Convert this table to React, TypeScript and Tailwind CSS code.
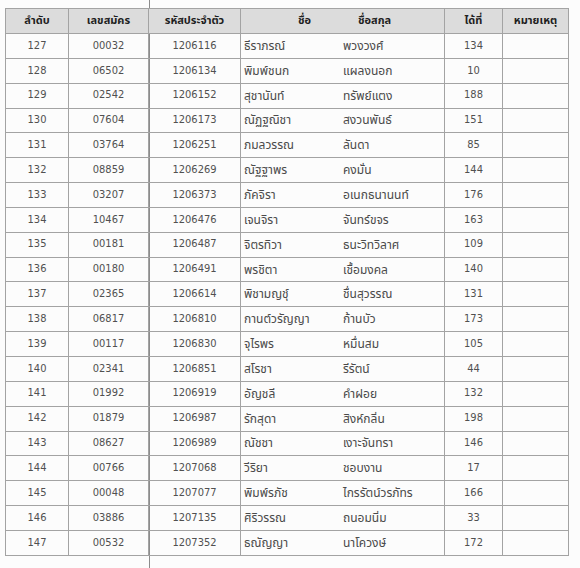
import React from 'react';

// ตารางรายชื่อผู้สอบผ่าน (สแกนจากเอกสาร)

type Row = [number, string, string, string, string, number];

const rows: Row[] = [
  [127, '00032', '1206116', 'ธีราภรณ์', 'พวงวงศ์', 134],
  [128, '06502', '1206134', 'พิมพ์ชนก', 'แผลงนอก', 10],
  [129, '02542', '1206152', 'สุชานันท์', 'ทรัพย์แตง', 188],
  [130, '07604', '1206173', 'ณัฏฐณิชา', 'สงวนพันธ์', 151],
  [131, '03764', '1206251', 'ภมลวรรณ', 'ลันดา', 85],
  [132, '08859', '1206269', 'ณัฐฐาพร', 'คงมั่น', 144],
  [133, '03207', '1206373', 'ภัคจิรา', 'อเนกธนานนท์', 176],
  [134, '10467', '1206476', 'เจนจิรา', 'จันทร์ขจร', 163],
  [135, '00181', '1206487', 'จิตรทิวา', 'ธนะวิทวิลาศ', 109],
  [136, '00180', '1206491', 'พรชิตา', 'เชื้อมงคล', 140],
  [137, '02365', '1206614', 'พิชามญชุ์', 'ชื่นสุวรรณ', 131],
  [138, '06817', '1206810', 'กานต์วรัญญา', 'ก้านบัว', 173],
  [139, '00117', '1206830', 'จุไรพร', 'หมื่นสม', 105],
  [140, '02341', '1206851', 'สโรชา', 'รีรัตน์', 44],
  [141, '01992', '1206919', 'อัญชลี', 'คำฝอย', 132],
  [142, '01879', '1206987', 'รักสุดา', 'สิงห์กลิ่น', 198],
  [143, '08627', '1206989', 'ณัชชา', 'เงาะจันทรา', 146],
  [144, '00766', '1207068', 'วีริยา', 'ชอบงาน', 17],
  [145, '00048', '1207077', 'พิมพ์รภัช', 'ไกรรัตน์วรภัทร', 166],
  [146, '03886', '1207135', 'ศิริวรรณ', 'ถนอมนิ่ม', 33],
  [147, '00532', '1207352', 'ธณัญญา', 'นาโควงษ์', 172],
];

const cell = 'border border-[#a3a3a3] text-center';
// ตัวเลขในเอกสารเป็นฟอนต์แคบ
const num = `${cell} font-['DejaVu_Sans_Condensed','DejaVu_Sans',sans-serif] font-stretch-condensed text-[11px] text-[#505050]`;

export default function App() {
  return (
    <div
      className="relative w-[580px] h-[568px] overflow-hidden bg-[#fcfcfc] pl-[5px] pt-[8px] text-[12px] text-[#4a4a4a]"
      style={{ fontFamily: '"Noto Sans Thai", "Noto Sans", "DejaVu Sans", sans-serif' }}
    >
      {/* เส้นพับกระดาษจากการสแกน */}
      <div className="absolute left-[149px] top-0 h-[568px] w-px bg-[#8c8c8c]" />
      <table className="relative table-fixed border-collapse">
        <colgroup>
          <col className="w-[63px]" />
          <col className="w-[80px]" />
          <col className="w-[92px]" />
          <col className="w-[204px]" />
          <col className="w-[58px]" />
          <col className="w-[66px]" />
        </colgroup>
        <thead>
          <tr className="h-[25px] bg-[#dcdcdc] text-[#1f1f1f] font-bold text-[11px]">
            <th className={cell}>ลำดับ</th>
            <th className={cell}>เลขสมัคร</th>
            <th className={cell}>รหัสประจำตัว</th>
            <th className="border border-[#a3a3a3] p-0">
              <div className="flex">
                <span className="w-[70px] text-right">ชื่อ</span>
                <span className="flex-1 pl-[47px] text-left">ชื่อสกุล</span>
              </div>
            </th>
            <th className={cell}>ได้ที่</th>
            <th className={cell}>หมายเหตุ</th>
          </tr>
        </thead>
        <tbody>
          {rows.map(([no, app, id, first, last, rank]) => (
            <tr key={no} className="h-[24.85px]">
              <td className={num}>{no}</td>
              <td className={num}>{app}</td>
              <td className={num}>{id}</td>
              <td className="border border-[#a3a3a3] p-0">
                <div className="flex">
                  <span className="w-[102px] pl-[3px]">{first}</span>
                  <span className="flex-1">{last}</span>
                </div>
              </td>
              <td className={num}>{rank}</td>
              <td className={cell}></td>
            </tr>
          ))}
        </tbody>
      </table>
    </div>
  );
}
